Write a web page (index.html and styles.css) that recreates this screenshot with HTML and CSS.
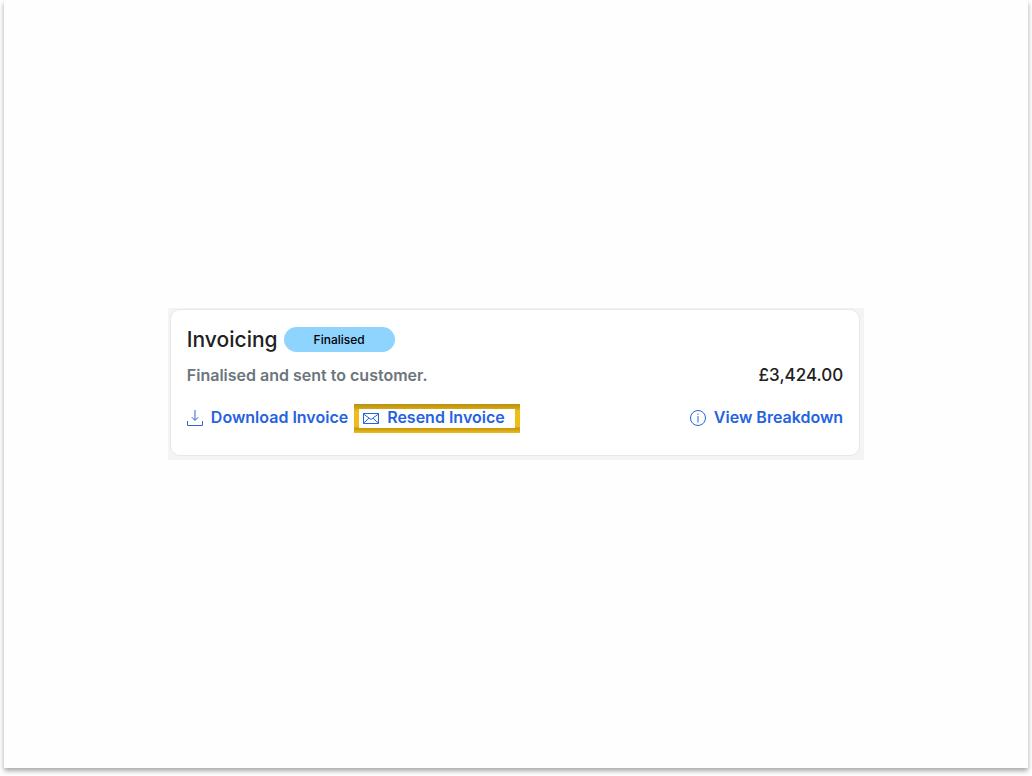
FILE: index.html
```
<!DOCTYPE html>
<html lang="en">
<head>
	<meta charset="UTF-8">
	<meta name="viewport" content="width=device-width, initial-scale=1">
	<title>Invoicing</title>
	<link rel="stylesheet" href="styles.css">
</head>
<body>
	<main class="sheet">
		<div class="panel">
			<section class="card">
				<div class="card-header">
					<h1>Invoicing</h1>
					<span class="badge">Finalised</span>
				</div>
				<div class="summary">
					<p class="status">Finalised and sent to customer.</p>
					<p class="total">£3,424.00</p>
				</div>
				<div class="actions">
					<a class="action" href="#download">
						<svg width="16" height="16" viewBox="0 0 16 16" fill="none" stroke="currentColor">
							<path d="M.5 11v4.5h15V11"/>
							<path d="M8 0v10" stroke-opacity=".5" stroke-width="2"/>
							<path d="M4.8 7.2 8 10.4l3.2-3.2"/>
						</svg>
						<span>Download Invoice</span>
					</a>
					<a class="action highlight" href="#resend">
						<svg width="16" height="16" viewBox="0 0 16 16" fill="none" stroke="currentColor">
							<path d="M.5 3.5h15v10H.5z"/>
							<path d="M.5 4 8 9.5 15.5 4M.5 13.2 6 8.2M15.5 13.2 10 8.2"/>
						</svg>
						<span>Resend Invoice</span>
					</a>
					<a class="action breakdown" href="#breakdown">
						<svg width="16" height="16" viewBox="0 0 16 16" fill="none" stroke="currentColor">
							<circle cx="8" cy="8" r="7.5"/>
							<path d="M8 6v6.4M8 3.4v1.4" stroke-opacity=".5" stroke-width="2"/>
						</svg>
						<span>View Breakdown</span>
					</a>
				</div>
			</section>
		</div>
	</main>
</body>
</html>
```
FILE: styles.css
```
*{
	box-sizing: border-box;
}
body,h1,p{
	margin: 0;
	padding: 0;
}
body{
	font-family: Inter, "Noto Sans", sans-serif;
	font-size: 16px;
	line-height: 24px;
	color: #212121;
	background: #fff;
}
.sheet{
	display: flex;
	align-items: center;
	justify-content: center;
	min-height: calc(100vh - 8px);
	margin: 0 4px 8px;
	background: #fefefe;
	box-shadow: 0 3px 5px rgba(0,0,0,.35);
}
.panel{
	width: 68%;
	min-width: 560px;
	padding: 1px 4px 4px 2px;
	background: #f4f4f4;
}
.card{
	padding: 17px 16px 22px;
	background: #fff;
	border: 1px solid #e8e8ec;
	border-radius: 10px;
}
.card-header{
	display: flex;
	align-items: center;
	gap: 6px;
}
h1{
	font-size: 21px;
	font-weight: 500;
	line-height: 24px;
}
.badge{
	padding: 0 30px;
	font-size: 12px;
	font-weight: 500;
	line-height: 25px;
	color: #000;
	background: #8fd3ff;
	border-radius: 13px;
}
.summary{
	display: flex;
	justify-content: space-between;
	margin-top: 11px;
}
.status{
	font-weight: 600;
	color: #6c757d;
}
.total{
	font-size: 17px;
	font-weight: 500;
}
.actions{
	display: flex;
	align-items: center;
	gap: 6px;
	margin-top: 17px;
}
.action{
	display: flex;
	align-items: center;
	gap: 8px;
	padding: 4px 0 6px;
	font-weight: 600;
	line-height: 19px;
	color: #2563e0;
	text-decoration: none;
}
.highlight{
	padding: 4px 15px 6px 9px;
	/* gold frame, darker along the top and under the opening */
	background:
		linear-gradient(#fff, #fff) 5px 5px / calc(100% - 10px) calc(100% - 10px) no-repeat,
		linear-gradient(#b8900f, #cfa212 4px, #f0bd18 7px, #f0bd18 calc(100% - 6px), #c2950f calc(100% - 5px), #f0bd18);
}
.breakdown{
	margin-left: auto;
}
```
